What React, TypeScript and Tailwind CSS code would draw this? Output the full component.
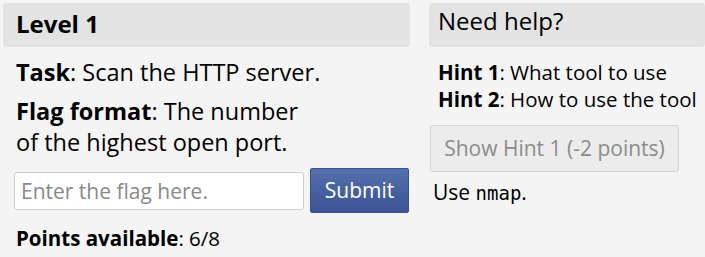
import React, { useState } from 'react';

function App() {
  const [flag, setFlag] = useState<string>('');
  const [showHint, setShowHint] = useState<boolean>(false);

  return (
    <div className="min-h-screen bg-[#f4f4f4] text-black" style={{ fontFamily: '"Open Sans", sans-serif' }}>
      <div className="flex gap-[19px] pl-[3px] pt-[3px]">
        {/* Level */}
        <div className="w-[407px] shrink-0">
          <div className="h-[44px] rounded-sm bg-[#e3e3e3] pl-[13px] pt-[4px]">
            <h1 className="text-[24px] leading-[33px] font-bold">Level 1</h1>
          </div>
          <div className="pl-[13px] pt-[10px] max-w-[322px] text-[23.5px] leading-[31px]">
            <p>
              <b>Task</b>: Scan the HTTP server.
            </p>
            <p className="mt-[8px]">
              <b>Flag format</b>: The number of the highest open port.
            </p>
          </div>
          <div className="flex items-center gap-[6px] pl-[11px] mt-[10px]">
            <input
              value={flag}
              onChange={e => setFlag(e.target.value)}
              placeholder="Enter the flag here."
              className="w-[290px] h-[38px] rounded-[3px] border border-[#cccccc] bg-white px-[6px] text-[21px] placeholder:text-[#8a8a8a] outline-none"
            />
            <button className="w-[99px] h-[45px] rounded-[2px] border border-[#3a5090] bg-gradient-to-b from-[#5470ac] to-[#3b5394] text-white text-[21px]">
              Submit
            </button>
          </div>
          <p className="pl-[13px] mt-[11px] text-[20.5px] leading-[28px]">
            <b>Points available</b>: 6/8
          </p>
        </div>

        {/* Help */}
        <div className="flex-1">
          <div className="h-[44px] rounded-sm bg-[#e3e3e3] pl-[9px] pt-[1px]">
            <h2 className="text-[24px] leading-[33px]">Need help?</h2>
          </div>
          <div className="pl-[9px] pt-[12px] text-[20.5px] leading-[27px]">
            <p><b>Hint 1</b>: What tool to use</p>
            <p><b>Hint 2</b>: How to use the tool</p>
          </div>
          <button
            onClick={() => setShowHint(true)}
            className="ml-[1px] mt-[12px] w-[249px] h-[47px] rounded-[3px] border border-[#d4d4d4] bg-[#ececec] text-[#8b8b8b] text-[21px]"
          >
            Show Hint 1 (-2 points)
          </button>
          <p className="pl-[4px] mt-[6px] text-[21px] leading-[28px]">
            Use <code style={{ fontFamily: '"DejaVu Sans Mono", monospace' }} className="text-[19px]">nmap</code>.
          </p>
          {showHint && null}
        </div>
      </div>
    </div>
  );
}

export default App;
